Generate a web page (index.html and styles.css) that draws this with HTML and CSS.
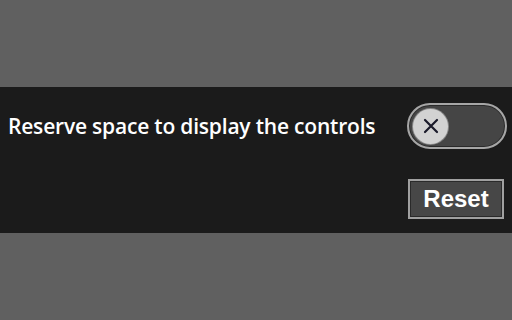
FILE: index.html
```html
<!DOCTYPE html>
<html>
<head>
<meta charset="utf-8">
<link rel="stylesheet" href="styles.css">
</head>
<body>
<div class="band">
  <div class="row">
    <span class="label">Reserve space to display the controls</span>
    <div class="toggle">
      <div class="knob">
        <svg width="16" height="16" viewBox="0 0 16 16"><path d="M2 2 L14 14 M14 2 L2 14" stroke="#1a1a2a" stroke-width="2.2" stroke-linecap="round"/></svg>
      </div>
    </div>
  </div>
  <div class="actions">
    <button class="reset">Reset</button>
  </div>
</div>
</body>
</html>
```
FILE: styles.css
```css
html, body {
  margin: 0;
  padding: 0;
  background: #606060;
  width: 512px;
  height: 320px;
  overflow: hidden;
}
body {
  padding-top: 87px;
  box-sizing: border-box;
}
.band {
  background: #1b1b1b;
  height: 146px;
  box-sizing: border-box;
  padding: 16px 5px 0 8px;
}
.row {
  display: flex;
  justify-content: space-between;
  align-items: center;
}
.label {
  color: #ffffff;
  font-family: "Open Sans", sans-serif;
  font-weight: 600;
  font-size: 21px;
  letter-spacing: -0.2px;
  white-space: nowrap;
}
.toggle {
  width: 100px;
  height: 46px;
  box-sizing: border-box;
  border: 2px solid #a6a6a6;
  border-radius: 23px;
  background: #454545;
  box-shadow: inset 0 0 0 1px #2a2a2a;
  display: flex;
  align-items: center;
  padding-left: 4px;
}
.knob {
  width: 35px;
  height: 35px;
  border-radius: 50%;
  background: #d2d2d2;
  box-shadow: 0 0 0 1px #888;
  display: flex;
  align-items: center;
  justify-content: center;
}
.knob svg { display: block; }
.actions {
  display: flex;
  justify-content: flex-end;
  margin-top: 30px;
  padding-right: 3px;
}
.reset {
  width: 96px;
  height: 40px;
  box-sizing: border-box;
  border: 2px solid #a0a0a0;
  box-shadow: inset 0 0 0 1px #2a2a2a;
  background: #474747;
  color: #ffffff;
  font-family: "Liberation Sans", Arial, sans-serif;
  font-weight: bold;
  font-size: 24px;
  padding: 0;
  border-radius: 0;
}
```
